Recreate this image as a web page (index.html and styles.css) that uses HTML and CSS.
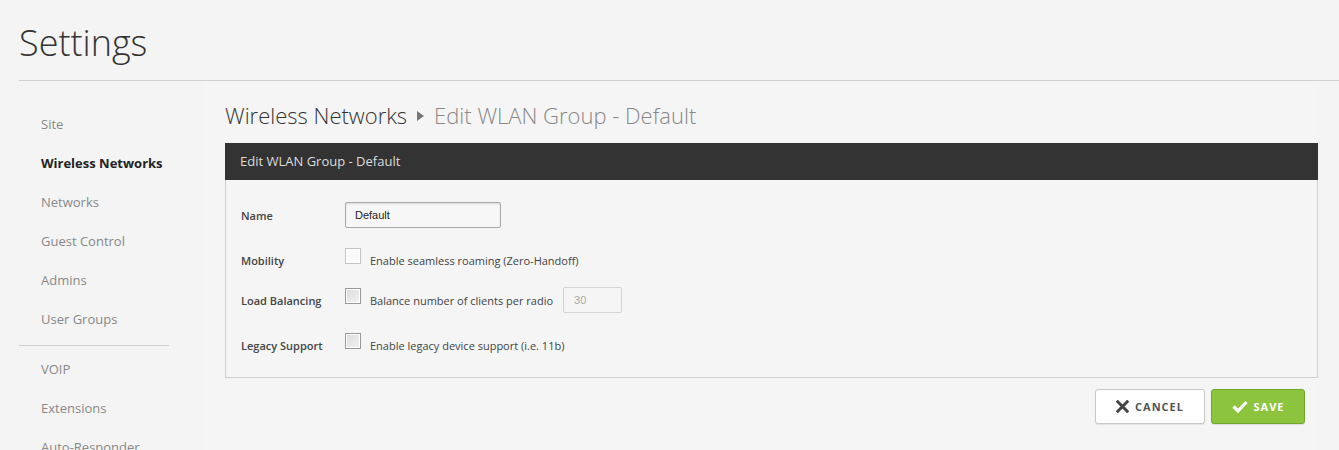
FILE: index.html
```html
<!DOCTYPE html>
<html lang="en">
<head>
    <meta charset="UTF-8">
    <title>Settings</title>
    <link rel="stylesheet" href="styles.css">
</head>
<body>
    <!-- page title -->
    <header class="page-head">
        <h1 class="page-title">Settings</h1>
    </header>

    <div class="layout">
        <!-- left menu -->
        <nav class="side">
            <ul class="side-list">
                <li class="side-item">Site</li>
                <li class="side-item active">Wireless Networks</li>
                <li class="side-item">Networks</li>
                <li class="side-item">Guest Control</li>
                <li class="side-item">Admins</li>
                <li class="side-item">User Groups</li>
            </ul>
            <div class="side-sep"></div>
            <ul class="side-list">
                <li class="side-item">VOIP</li>
                <li class="side-item">Extensions</li>
                <li class="side-item">Auto-Responder</li>
            </ul>
        </nav>

        <!-- main content -->
        <main class="main">
            <div class="crumbs">
                <span class="crumb-root">Wireless Networks</span>
                <span class="crumb-arrow"></span>
                <span class="crumb-cur">Edit WLAN Group - Default</span>
            </div>

            <section class="panel">
                <div class="panel-head">Edit WLAN Group - Default</div>
                <div class="panel-body">
                    <div class="row row-name">
                        <label class="row-label">Name</label>
                        <input class="text-input" type="text" value="Default">
                    </div>
                    <div class="row row-mob">
                        <span class="row-label">Mobility</span>
                        <span class="check check-light"></span>
                        <span class="check-text">Enable seamless roaming (Zero-Handoff)</span>
                    </div>
                    <div class="row row-lb">
                        <span class="row-label">Load Balancing</span>
                        <span class="check"></span>
                        <span class="check-text">Balance number of clients per radio</span>
                        <input class="num-input" type="text" value="30" disabled>
                    </div>
                    <div class="row row-legacy">
                        <span class="row-label">Legacy Support</span>
                        <span class="check"></span>
                        <span class="check-text">Enable legacy device support (i.e. 11b)</span>
                    </div>
                </div>
            </section>

            <div class="actions">
                <button class="btn btn-cancel">
                    <svg class="btn-icon" width="13" height="13" viewBox="0 0 13 13">
                        <path d="M1.8 1.8 L11.2 11.2 M11.2 1.8 L1.8 11.2" stroke="#444" stroke-width="3" stroke-linecap="square"/>
                    </svg>
                    CANCEL
                </button>
                <button class="btn btn-save">
                    <svg class="btn-icon" width="16" height="13" viewBox="0 0 16 13">
                        <path d="M1.5 6.5 L6 11 L14.5 2" fill="none" stroke="#fff" stroke-width="3.2"/>
                    </svg>
                    SAVE
                </button>
            </div>
        </main>
    </div>
</body>
</html>
```

FILE: styles.css
```css
* {
    box-sizing: border-box;
}

body {
    margin: 0;
    background: #f4f4f4;
    font-family: "Open Sans", "Liberation Sans", sans-serif;
    color: #333;
    height: 450px;
    overflow: hidden;
}

/* title */
.page-head {
    margin-left: 19px;
    height: 81px;
    border-bottom: 1px solid #cfcfcf;
}
.page-title {
    margin: 0;
    padding-top: 20px;
    font-size: 36px;
    font-weight: 300;
    line-height: 46px;
    color: #333;
}

.layout {
    display: flex;
}

/* sidebar */
.side {
    width: 205px;
    flex: none;
    padding-top: 24px;
}
.side-list {
    list-style: none;
    margin: 0;
    padding: 0 0 0 41px;
}
.side-item {
    height: 39px;
    line-height: 39px;
    font-size: 13px;
    color: #888;
}
.side-item.active {
    font-weight: 700;
    color: #222;
}
.side-sep {
    margin: 6px 0 4px 19px;
    width: 150px;
    border-top: 1px solid #cfcfcf;
}

/* main */
.main {
    flex: 1;
    background: #f5f5f5;
    padding: 19px 0 0 20px;
    margin-right: 21px;
}

.crumbs {
    display: flex;
    align-items: center;
    height: 30px;
    font-size: 22px;
    font-weight: 300;
}
.crumb-root {
    color: #333;
}
.crumb-arrow {
    width: 0;
    height: 0;
    margin: 2px 10px 0 10px;
    border-left: 7px solid #777;
    border-top: 5px solid transparent;
    border-bottom: 5px solid transparent;
}
.crumb-cur {
    color: #888;
}

.panel {
    margin-top: 13px;
}
.panel-head {
    height: 37px;
    line-height: 37px;
    padding-left: 15px;
    background: #333;
    color: #ddd;
    font-size: 13px;
}
.panel-body {
    height: 198px;
    padding: 22px 0 0 15px;
    border: 1px solid #cfcfcf;
    border-top: none;
}

.row {
    display: flex;
    align-items: center;
    height: 26px;
    font-size: 11px;
}
.row-mob {
    margin-top: 19px;
}
.row-lb {
    margin-top: 14px;
}
.row-legacy {
    margin-top: 19px;
}
.row-label {
    width: 104px;
    flex: none;
    font-weight: 600;
    color: #444;
}

.text-input {
    width: 156px;
    height: 26px;
    padding: 0 9px;
    border: 1px solid #aaa;
    border-radius: 2px;
    background: #f7f7f7;
    box-shadow: inset 0 1px 2px rgba(0, 0, 0, .12);
    font-family: "Liberation Sans", Arial, sans-serif;
    font-size: 11px;
    color: #222;
}

.check {
    width: 16px;
    height: 16px;
    flex: none;
    margin-bottom: 8px;
    border: 1px solid #999;
    background: linear-gradient(135deg, #dcdcdc, #f2f2f2);
    box-shadow: inset 0 0 0 1px #fff;
}
.check-light {
    border-color: #c4c4c4;
    background: #fafafa;
}
.check-text {
    margin-left: 9px;
    color: #444;
}

.num-input {
    margin-left: 10px;
    width: 59px;
    height: 26px;
    padding: 0 10px;
    border: 1px solid #d4d4d4;
    border-radius: 2px;
    background: #f5f5f5;
    font-family: "Liberation Sans", Arial, sans-serif;
    font-size: 11px;
    color: #aaa;
}

/* buttons */
.actions {
    display: flex;
    justify-content: flex-end;
    gap: 6px;
    margin-top: 11px;
    padding-right: 13px;
}
.btn {
    display: flex;
    align-items: center;
    justify-content: center;
    height: 35px;
    border-radius: 3px;
    font-family: inherit;
    font-size: 11px;
    font-weight: 700;
    letter-spacing: 1px;
}
.btn-icon {
    margin-right: 6px;
}
.btn-cancel {
    width: 110px;
    background: #fff;
    border: 1px solid #c8c8c8;
    color: #555;
    box-shadow: 0 1px 1px rgba(0, 0, 0, .08);
}
.btn-save {
    width: 94px;
    background: #8cc43d;
    border: 1px solid #72a72c;
    color: #fff;
    box-shadow: 0 1px 1px rgba(0, 0, 0, .1);
}
```
